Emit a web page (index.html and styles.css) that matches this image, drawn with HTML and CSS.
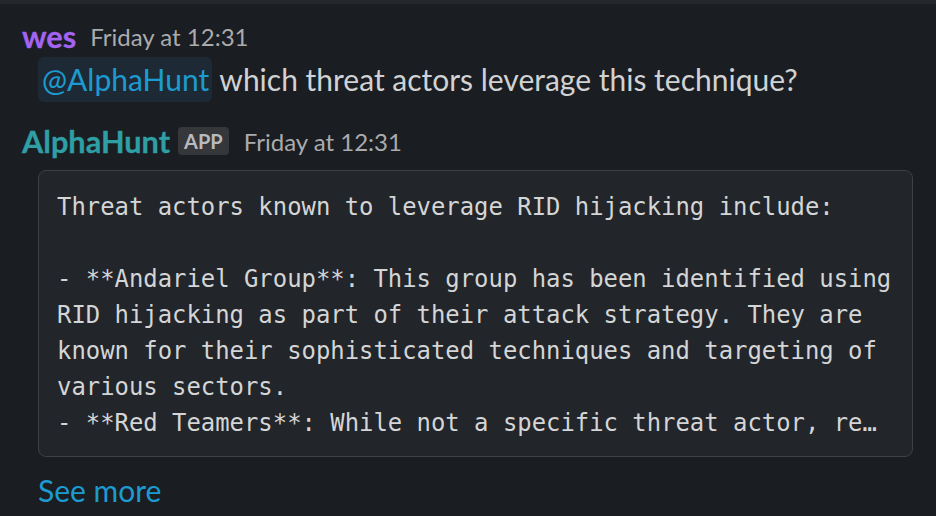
FILE: index.html
```html
<!DOCTYPE html>
<html>
<head>
<meta charset="utf-8">
<link rel="stylesheet" href="styles.css">
</head>
<body>
<div class="topbar"></div>
<div class="feed">
  <div class="msg">
    <div class="head">
      <span class="name wes">wes</span>
      <span class="time">Friday at 12:31</span>
    </div>
    <div class="body">
      <span class="mention">@AlphaHunt</span> which threat actors leverage this technique?
    </div>
  </div>
  <div class="msg second">
    <div class="head">
      <span class="name bot">AlphaHunt</span>
      <span class="badge">APP</span>
      <span class="time">Friday at 12:31</span>
    </div>
    <div class="body">
<pre class="code">Threat actors known to leverage RID hijacking include:

- **Andariel Group**: This group has been identified using
RID hijacking as part of their attack strategy. They are
known for their sophisticated techniques and targeting of
various sectors.
- **Red Teamers**: While not a specific threat actor, re…</pre>
      <div class="more">See more</div>
    </div>
  </div>
</div>
</body>
</html>
```
FILE: styles.css
```css
html, body {
  margin: 0;
  padding: 0;
  background: #1a1d21;
  width: 936px;
  height: 516px;
  overflow: hidden;
}
body {
  font-family: Lato, "Noto Sans", sans-serif;
  color: #d1d2d3;
}
.topbar {
  height: 4px;
  background: #25272b;
}
.feed {
  padding: 15px 0 0 22px;
}
.head {
  display: flex;
  align-items: center;
  height: 36px;
}
.name {
  font-weight: 700;
  font-size: 30.7px;
  line-height: 36px;
  -webkit-text-stroke: 0.3px currentColor;
}
.wes { color: #a464f0; }
.bot { color: #2e9fa5; }
.time {
  font-size: 24px;
  color: #ababad;
  margin-left: 14px;
  line-height: 36px;
}
.badge {
  margin-left: 8px;
  background: #35373b;
  color: #b9babd;
  font-weight: 700;
  font-size: 20px;
  line-height: 28px;
  height: 28px;
  padding: 0 6px;
  border-radius: 4px;
  margin-top: -2px;
}
.badge + .time { margin-left: 15px; }
.body {
  padding-left: 16px;
  font-size: 30px;
  line-height: 44px;
}
.msg .body { margin-top: 2px; }
.mention {
  display: inline-block;
  background: #1d2a35;
  color: #1d9bd1;
  border-radius: 6px;
  padding: 0 3px 0 4px;
  line-height: 45px;
}
.second { margin-top: 22px; }
.second .body { margin-top: 10px; width: 875px; }
.code {
  margin: 0;
  width: 875px;
  box-sizing: border-box;
  background: #222529;
  border: 1px solid #3e4044;
  border-radius: 8px;
  padding: 18px 18px 15px;
  font-family: "DejaVu Sans Mono", monospace;
  font-size: 23.9px;
  line-height: 36px;
  color: #d4d5d6;
  white-space: pre;
}
.more {
  margin-top: 15px;
  color: #1d9bd1;
  font-size: 30px;
  line-height: 36px;
}
```
